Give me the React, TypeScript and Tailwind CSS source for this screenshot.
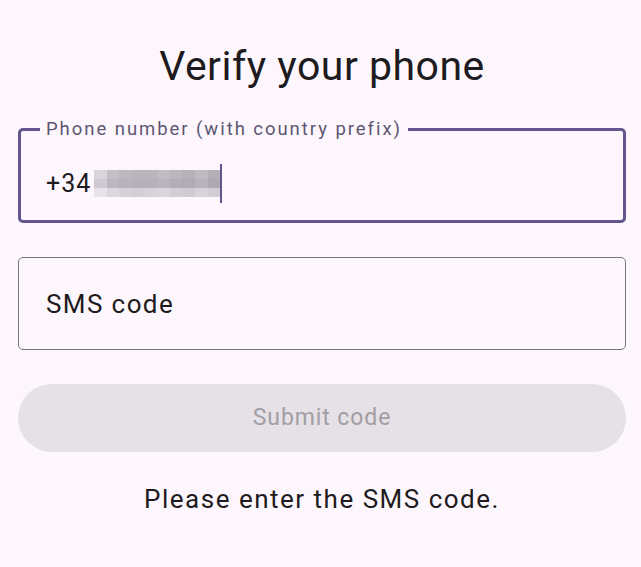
const mosaic = [
  ['#d9d4db', '#c4bec7', '#bdb7c0', '#bab4bd', '#bbb5be', '#c1bbc4', '#bcb6bf', '#b6b0b9', '#bfb9c2', '#b4aeb7'],
  ['#cfcad2', '#bcb6bf', '#b8b2bb', '#b6b0b9', '#b7b1ba', '#bab4bd', '#b3adb6', '#b1abb4', '#b9b3bc', '#afa9b2'],
  ['#e8e3ea', '#dcd7de', '#d6d1d8', '#d3ced5', '#d8d3da', '#dad5dc', '#d3ced5', '#d0cbd2', '#d8d3da', '#d2cdd4'],
];

export default function App() {
  return (
    <div className="min-h-[567px] w-full bg-[#fdf7fd] pl-[18px] pr-[15px] pt-[42px] font-['Roboto',sans-serif] text-[#1d1b20]">
      <h1 className="text-center text-[41px] leading-[48px] tracking-[0.5px]">Verify your phone</h1>

      {/* Focused phone field */}
      <fieldset className="mt-[29px] h-[104px] rounded-[5px] border-[3px] border-[#65558f] px-[25px]">
        <legend className="-ml-[6px] px-[6px] text-[18.5px] leading-[20px] tracking-[1.95px] text-[#5e5672]">
          Phone number (with country prefix)
        </legend>
        <div className="mt-[25px] flex h-[39px] items-center">
          <span className="text-[25px] leading-[30px] tracking-[1px]">+34</span>
          <div className="ml-[3px] flex flex-col">
            {mosaic.map((row, i) => (
              <div key={i} className="flex">
                {row.map((c, j) => (
                  <div key={j} className="h-[9px] w-[12.6px]" style={{ backgroundColor: c }} />
                ))}
              </div>
            ))}
          </div>
          <div className="h-[39px] w-[2px] bg-[#65558f]" />
        </div>
      </fieldset>

      {/* SMS code field */}
      <div className="mt-[34px] flex h-[93px] items-center rounded-[5px] border border-[#79747e] px-[27px]">
        <span className="text-[26px] leading-[30px] tracking-[1.4px] text-[#1d1b20]">SMS code</span>
      </div>

      <button
        disabled
        className="mt-[34px] flex h-[68px] w-full items-center justify-center rounded-full bg-[#e6e1e7] text-[23px] tracking-[0.9px] text-[#a19ea4]"
      >
        Submit code
      </button>

      <p className="mt-[32px] text-center text-[26px] leading-[30px] tracking-[1.5px] text-[#1d1b20]">
        Please enter the SMS code.
      </p>
    </div>
  );
}
